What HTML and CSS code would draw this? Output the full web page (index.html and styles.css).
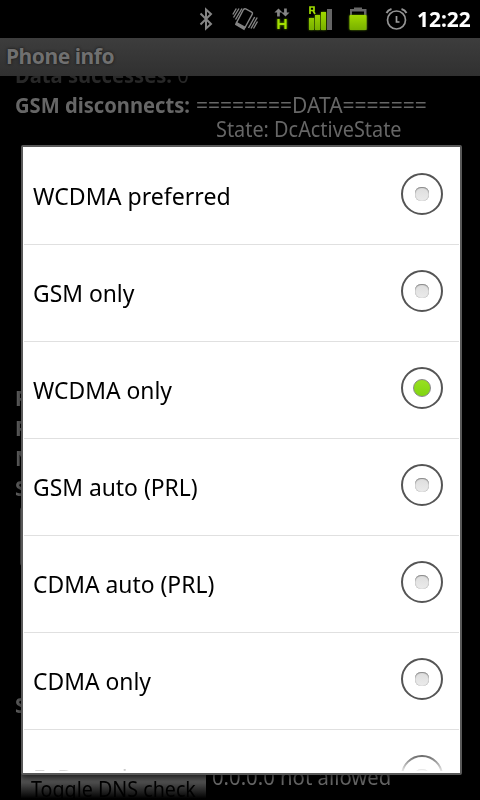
FILE: index.html
```html
<!DOCTYPE html>
<html lang="en">
<head>
<meta charset="utf-8">
<title>Phone info</title>
<link rel="stylesheet" href="styles.css">
</head>
<body>
<div class="screen">
  <header class="status">
    <svg class="icons" width="222" height="38" viewBox="190 0 222 38" fill="none">
      <defs>
        <linearGradient id="green" x1="0" y1="0" x2="0" y2="1"><stop offset="0" stop-color="#a0d800"/><stop offset="1" stop-color="#78b000"/></linearGradient>
        <filter id="glow" x="-50%" y="-50%" width="200%" height="200%"><feGaussianBlur stdDeviation="1.3"/></filter>
      </defs>
      <path d="M200.500 13.500l10.500 10.500-5 4.500v-19l5 4.500-10.500 10.500" stroke="#858585" stroke-width="2"/>
      <g stroke="#858585" stroke-width="1.400">
        <path d="M243.500 9.500q1-1.200 2.200-.6l6 3.300q1.300.8.6 2l-7 12.800q-.8 1.400-2 .7l-6-3.400q-1.300-.8-.6-2z"/>
        <path d="M236.500 22.500l8.500 4.700-1 2-8.200-4.700z" fill="#858585"/>
        <path d="M242 8.500l-6.500 11M239 8.500l-5.500 9M236.300 8.500l-3.500 6M251 28.500l6.200-11M248.500 28l6.200-11M253.500 28.500l4-7"/>
      </g>
      <path d="M278.500 8.500l4 4h-2.700v4h-2.700v-4h-2.700zM285.500 16.500l4-4h-2.700v-4h-2.700v4h-2.700z" fill="#858585"/>
      <path d="M278.500 19v10M285.500 19v10M278.500 24h7" stroke="#507800" stroke-width="3" filter="url(#glow)"/>
      <path d="M278.500 19v10M285.500 19v10M278.500 24h7" stroke="#a4e000" stroke-width="2.200"/>
      <path d="M309 18h5v12h-5zM315 15h5v15h-5zM321 12h5v18h-5z" fill="#609000" filter="url(#glow)"/>
      <path d="M309 18h5v12h-5zM315 15h5v15h-5zM321 12h5v18h-5z" fill="url(#green)"/>
      <path d="M327 9h5v21h-5z" fill="#656565"/>
      <path d="M310 14V7h4v3.500h-4M313 10.500l2 3.500" stroke="#9edc00" stroke-width="1.700"/>
      <path d="M350 9h4V7.500h8V9h4.500v21h-16.500z" fill="#686868"/>
      <path d="M352 11.500h12v3.500h-12z" fill="#000"/>
      <rect x="349.500" y="15" width="17" height="15" rx="1" fill="#609000" filter="url(#glow)"/>
      <rect x="349.500" y="15" width="17" height="15" rx="1" fill="url(#green)"/>
      <circle cx="396.500" cy="20" r="9" stroke="#949494" stroke-width="1.700"/>
      <path d="M396.500 16v6h3" stroke="#a0a0a0" stroke-width="1.700"/>
      <path d="M386.500 13q1.500-3 5-4M406.500 13q-1.500-3-5-4" stroke="#949494" stroke-width="2"/>
    </svg>
    <span class="clock fit">12:22</span>
  </header>
  <div class="title"><span class="fit-title">Phone info</span></div>
  <main class="page">
    <div class="cut"><span class="fit narrow"><b>Data successes:</b> 0</span></div>
    <div class="row"><b><span class="fit narrow">GSM disconnects:</span></b><span>========DATA=======</span></div>
    <div class="state"><span class="fit narrower">State: DcActiveState</span></div>
    <div class="labels"><b>P</b><b>P</b><b>N</b><b>S</b></div>
    <div class="spinner"></div>
    <div class="smsc"><b>S</b></div>
    <div class="dns"><span class="button"><span class="fit narrowest">Toggle DNS check</span></span><span class="fit address">0.0.0.0 not allowed</span></div>
  </main>
  <section class="dialog">
    <div class="option"><span class="fit wide">WCDMA preferred</span><i class="radio"></i></div>
    <div class="option"><span class="fit">GSM only</span><i class="radio"></i></div>
    <div class="option"><span class="fit">WCDMA only</span><i class="radio on"></i></div>
    <div class="option"><span class="fit">GSM auto (PRL)</span><i class="radio"></i></div>
    <div class="option"><span class="fit">CDMA auto (PRL)</span><i class="radio"></i></div>
    <div class="option"><span class="fit">CDMA only</span><i class="radio"></i></div>
    <div class="option"><span class="fit">EvDo only</span><i class="radio"></i></div>
    <div class="fade"></div>
  </section>
</div>
</body>
</html>
```
FILE: styles.css
```css
* { box-sizing: border-box; }
body { margin: 0; background: #000; font-family: "Noto Sans", "Open Sans", sans-serif; }
.screen { position: relative; width: 480px; height: 800px; overflow: hidden; background: #000; white-space: nowrap; }
.fit { display: inline-block; transform-origin: 0 50%; transform: scaleX(.953); }
.fit.wide { transform: scaleX(.963); }
.fit.narrow { transform: scaleX(.96); }
.fit.narrower { transform: scaleX(.946); }
.fit.narrowest { transform: scaleX(.937); }
.status { height: 38px; display: flex; padding-left: 190px; }
.icons { flex: none; }
.clock { color: #fff; font-weight: 700; font-size: 21px; line-height: 38px; margin-left: 5px; }
.clock.fit { transform: scaleX(.995); }
.title { height: 38px; padding-left: 6px; background: linear-gradient(#3d3d3d, #303030); color: #707070; font-weight: 700; font-size: 21px; line-height: 37px; text-shadow: 0 0 3px #111; }
.fit-title { letter-spacing: -.45px; }
.page { height: 724px; color: #666; font-size: 21px; line-height: 24px; opacity: .999; }
.cut { height: 17px; padding-left: 15px; display: flex; align-items: flex-end; overflow: hidden; line-height: 37px; color: #282828; }
.cut .fit { margin-bottom: -1px; }
.row { display: flex; height: 24px; padding-left: 15px; }
.row b { width: 181px; }
.state { height: 24px; padding-left: 216px; }
.labels { display: flex; flex-direction: column; margin-top: 242px; padding-left: 15px; color: #606060; }
.labels b { height: 30px; line-height: 30px; }
.spinner { width: 200px; height: 59px; margin: 4px 0 0 20px; background: #505050; border-radius: 3px; }
.smsc { height: 30px; line-height: 30px; margin-top: 124px; padding-left: 15px; color: #606060; }
.dns { display: flex; margin-top: 44px; line-height: 30px; }
.button { width: 185px; height: 36px; margin: 0 6px 0 21px; padding-left: 10px; color: #000; background: linear-gradient(#5c5c5c, #505050 50%, #000 96%); line-height: 51px; }
.address { line-height: 26px; }
.address.fit { transform: scaleX(.967); height: 26px; }
.dialog { position: absolute; left: 21px; top: 145px; width: 441px; height: 630px; overflow: hidden; background: #fff; border: 2px solid #595959; border-radius: 2px; box-shadow: 0 2px 6px #000b; }
.option { height: 97px; margin: 0 1px; padding: 0 16px 0 9px; display: flex; align-items: center; justify-content: space-between; border-bottom: 1px solid #e0e0e0; color: #000; font-size: 24px; line-height: 32px; }
.option:first-child { height: 98px; }
.radio { width: 42px; height: 42px; border: 2px solid #555; border-radius: 50%; display: grid; place-items: center; margin-top: -4px; }
.radio::after { content: ""; width: 14px; height: 14px; border-radius: 6px; background: linear-gradient(#ddd, #ebebeb); box-shadow: inset 0 1px 1px #888, inset 0 0 1px #999; }
.radio.on::after { width: 16px; height: 16px; border-radius: 50%; background: linear-gradient(#98e020, #80d510); border: 1px solid #888; box-shadow: none; }
.fade { position: absolute; left: 0; right: 0; bottom: 0; height: 20px; background: linear-gradient(#fff0, #ffffffd8 88%, #fff 90%); }
```
